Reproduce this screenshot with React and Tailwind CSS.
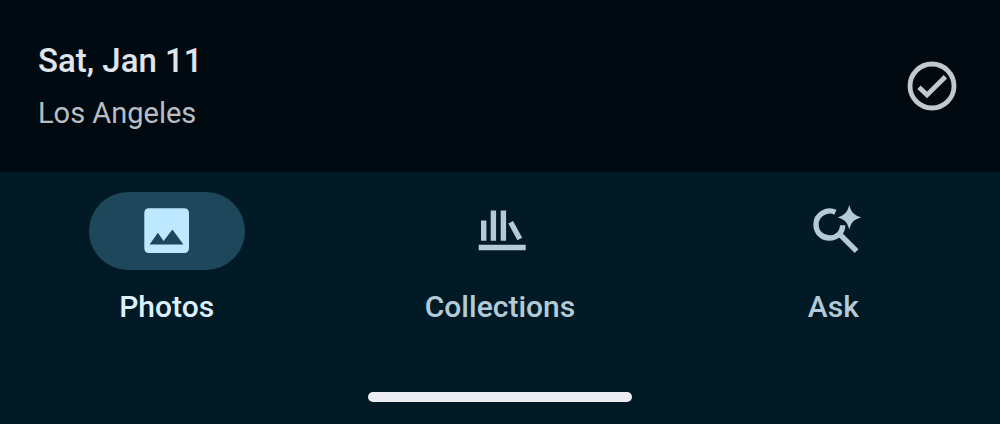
function CheckCircleIcon() {
  return (
    <svg viewBox="0 0 50 50" className="size-[50px]" fill="none" stroke="currentColor" aria-hidden="true">
      <circle cx="25" cy="25" r="22" strokeWidth="4.8" />
      <path d="M12 26.3 20 34 38.4 15.7" strokeWidth="4.8" />
    </svg>
  );
}

function PhotosIcon() {
  return (
    <svg viewBox="0 0 60 60" className="size-15" aria-hidden="true">
      <path
        fill="currentColor"
        fillRule="evenodd"
        d="M12 7.3H47Q52 7.3 52 12.3V47Q52 52 47 52H12Q7.3 52 7.3 47V12.3Q7.3 7.3 12 7.3ZM12.6 43.6H46.4L35.4 28.6 26.6 39.9 20.9 31.8Z"
      />
    </svg>
  );
}

function CollectionsIcon() {
  return (
    <svg viewBox="0 0 60 60" className="size-15" fill="none" stroke="currentColor" strokeWidth="5.4" aria-hidden="true">
      <path d="M13.7 19.6V39.8M23.4 9.6V39.8M33.4 9.6V39.8M40.7 21.2 49.8 38M8.7 46.5H55.7" />
    </svg>
  );
}

function AskIcon() {
  return (
    <svg viewBox="0 0 60 60" className="size-15" aria-hidden="true">
      <path
        fill="none"
        stroke="currentColor"
        strokeWidth="5.4"
        d="M32.4 11.2C24.3 7.4 13 13 13 23.5C13 31.5 19 37 26.4 37C34 37 39.8 31.5 39.6 24.3M35.6 32.2 53.6 50.2"
      />
      <path
        fill="currentColor"
        d="M46.3 4C48.2 11.3 50.6 14 58.3 16.3C50.6 18.7 48.2 21.3 46.3 28.6C44.2 21.3 42 18.7 34.6 16.3C42 14 44.2 11.3 46.3 4Z"
      />
    </svg>
  );
}

const tabs = [
  { label: "Photos", Icon: PhotosIcon, active: true },
  { label: "Collections", Icon: CollectionsIcon, active: false },
  { label: "Ask", Icon: AskIcon, active: false },
];

export default function App() {
  return (
    <div className="flex min-h-screen flex-col bg-[#021a25] font-['Roboto',sans-serif]">
      <header className="flex items-center justify-between bg-[#020a11] pt-9 pr-[43px] pb-[37px] pl-[38px]">
        <div>
          <h1 className="text-[33px] leading-[50px] font-medium text-[#e0e5eb]">Sat, Jan 11</h1>
          <p className="pt-[5px] text-[29px] leading-11 text-[#b9bec4]">Los Angeles</p>
        </div>
        <button type="button" aria-label="Select all photos from Sat, Jan 11" className="text-[#c3c8ce]">
          <CheckCircleIcon />
        </button>
      </header>

      <nav aria-label="Main" className="grid grid-cols-3 pt-5">
        {tabs.map(({ label, Icon, active }) => (
          <button
            key={label}
            type="button"
            aria-current={active ? "page" : undefined}
            className={
              active
                ? "flex flex-col items-center gap-[15px] text-[#dceffb]"
                : "flex flex-col items-center gap-[15px] text-[#b4cad7]"
            }
          >
            <span
              className={
                active
                  ? "flex h-[78px] w-[156px] items-center justify-center rounded-full bg-[#1e475c] text-[#bde8ff]"
                  : "flex h-[78px] w-[156px] items-center justify-center rounded-full"
              }
            >
              <Icon />
            </span>
            <span className="text-[30px] leading-11 font-medium">{label}</span>
          </button>
        ))}
      </nav>

      <div className="mt-auto flex justify-center pb-[22px]">
        <div className="h-2.5 w-[264px] rounded-full bg-[#ebecf1]" />
      </div>
    </div>
  );
}
